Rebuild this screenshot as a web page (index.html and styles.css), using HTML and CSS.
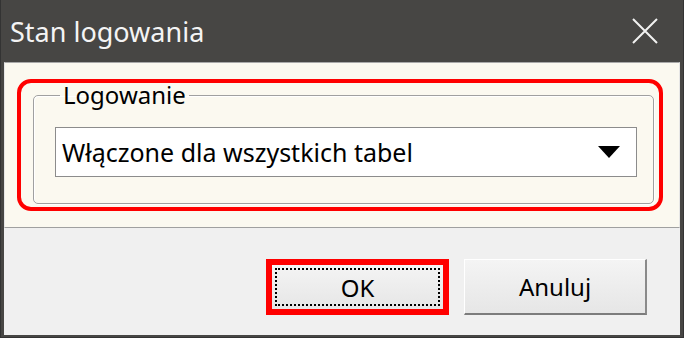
FILE: index.html
```html
<!DOCTYPE html>
<html lang="pl">
<head>
    <meta charset="UTF-8">
    <meta name="viewport" content="width=device-width, initial-scale=1.0">
    <title>Stan logowania</title>
    <link rel="stylesheet" href="styles.css">
</head>
<body>
    <div class="window">
        <div class="titlebar">
            <span class="title">Stan logowania</span>
            <svg class="close" width="26" height="26" viewBox="0 0 26 26">
                <path d="M1 1 L25 25 M25 1 L1 25" stroke="#f2f2f2" stroke-width="2" fill="none"/>
            </svg>
        </div>
        <div class="content">
            <div class="highlight">
                <fieldset class="group">
                    <legend>Logowanie</legend>
                    <div class="select">
                        <span>Włączone dla wszystkich tabel</span>
                        <span class="arrow"></span>
                    </div>
                </fieldset>
            </div>
        </div>
        <div class="footer">
            <button type="button" class="btn btn-ok"><span class="focus">OK</span></button>
            <button type="button" class="btn">Anuluj</button>
        </div>
    </div>
</body>
</html>
```

FILE: styles.css
```css
body
{
    margin: 0;
    font-family: "Noto Sans", "Open Sans", sans-serif;
}
.window
{
    width: 684px;
    height: 338px;
    box-sizing: border-box;
    background-color: #474644;
    padding: 0 3px 2px 3px;
    display: flex;
    flex-direction: column;
    border: 1px solid #333;
    border-top: none;
}
.titlebar
{
    height: 62px;
    flex: none;
    display: flex;
    align-items: center;
    justify-content: space-between;
    padding: 0 22px 0 6px;
}
.title
{
    color: #f4f4f4;
    font-size: 27px;
}
.content
{
    background-color: #fbf9f0;
    border-top: 1px solid #a9a9a9;
    border-left: 1px solid #e6e6e6;
    border-right: 1px solid #e6e6e6;
    border-bottom: 1px solid #a0a0a0;
    height: 166px;
    box-sizing: border-box;
    padding: 16px 0 0 12px;
}
.highlight
{
    width: 646px;
    box-sizing: border-box;
    border: 4px solid #ff0000;
    border-radius: 14px;
    padding: 0 5px 3px 12px;
}
.group
{
    margin: 0;
    border: 1px solid #a0a0a0;
    border-radius: 5px;
    box-shadow: inset 1px 1px 0 #fff, 1px 1px 0 #fff;
    padding: 0 16px 26px 21px;
}
.group legend
{
    font-size: 24px;
    line-height: 24px;
    margin-left: 5px;
    padding: 0 3px;
}
.select
{
    margin-top: 20px;
    height: 50px;
    box-sizing: border-box;
    border: 1px solid #8c8c8c;
    background-color: #fff;
    display: flex;
    align-items: center;
    justify-content: space-between;
    padding: 0 16px 0 6px;
    font-size: 25px;
}
.arrow
{
    width: 0;
    height: 0;
    border-left: 11px solid transparent;
    border-right: 11px solid transparent;
    border-top: 12px solid #000;
}
.footer
{
    flex: 1;
    background-color: #f0f0f0;
    display: flex;
    justify-content: flex-end;
    align-items: flex-start;
    gap: 15px;
    padding: 31px 33px 0 0;
}
.btn
{
    width: 183px;
    height: 56px;
    box-sizing: border-box;
    font-family: "Noto Sans", "Open Sans", sans-serif;
    font-size: 24px;
    color: #000;
    background: linear-gradient(#f4f4f4, #e6e6e6);
    border: 1px solid #fff;
    border-right: 2px solid #8a8a8a;
    border-bottom: 2px solid #7c7c7c;
    padding: 0;
}
.btn-ok
{
    border: 6px solid #ff0000;
    padding: 3px;
}
.focus
{
    display: flex;
    align-items: center;
    justify-content: center;
    height: 100%;
    border: 2px dotted #000;
    box-sizing: border-box;
}
```
